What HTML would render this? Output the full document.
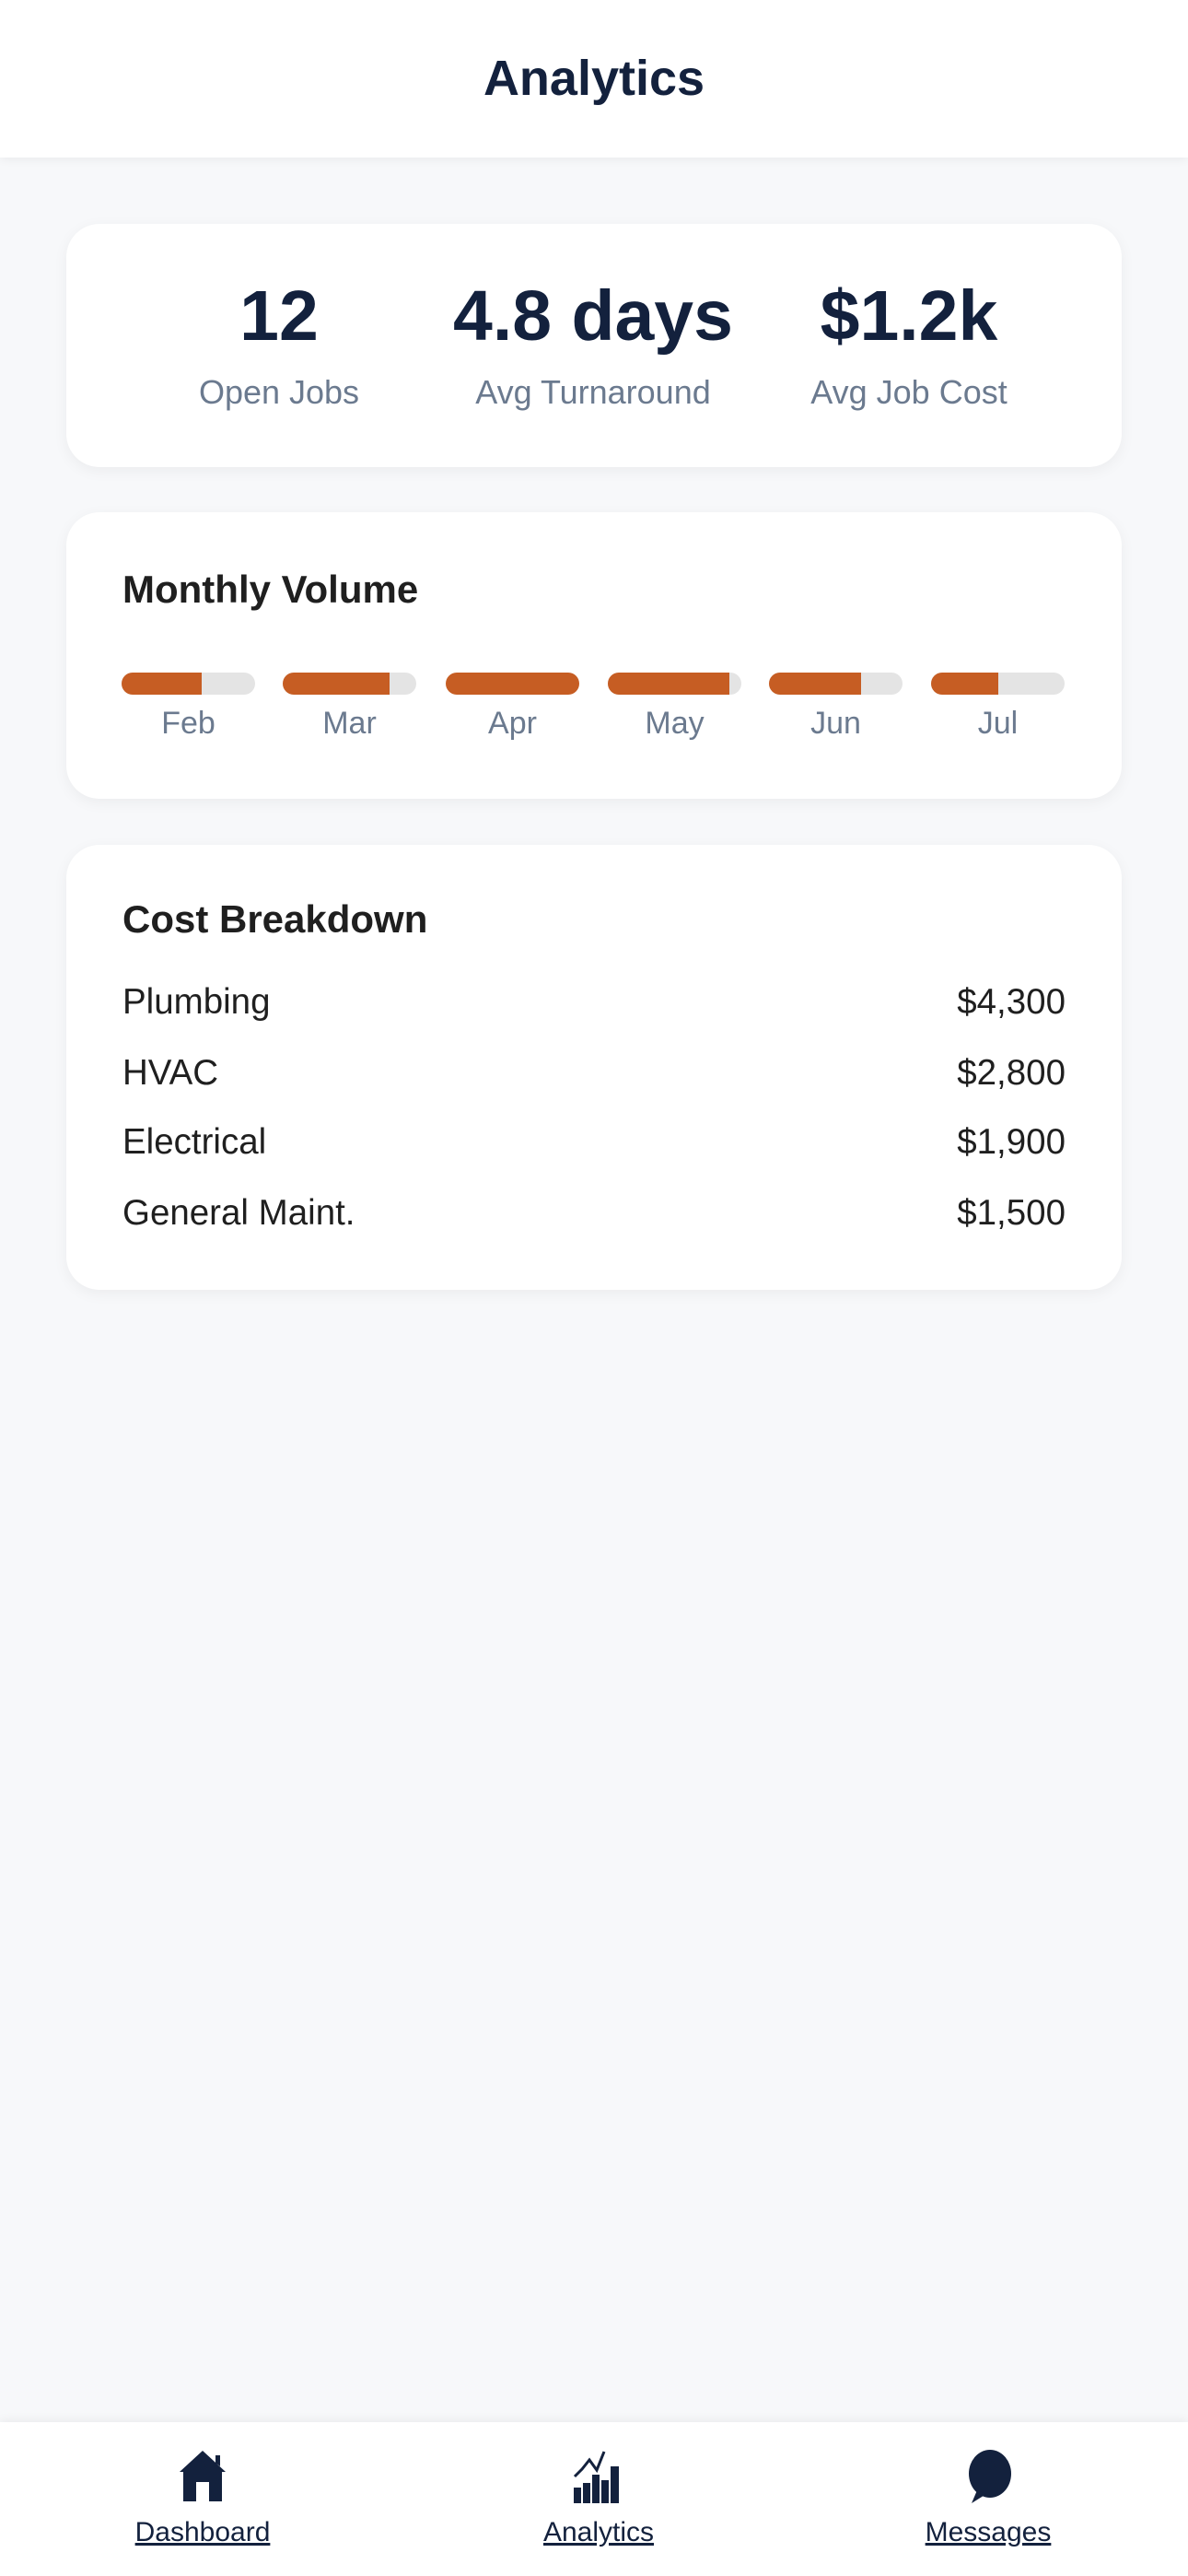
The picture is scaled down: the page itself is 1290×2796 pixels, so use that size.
<!DOCTYPE html>
<html><head><meta charset="utf-8"><style>
*{box-sizing:border-box;margin:0;padding:0}
body{width:1290px;height:2796px;background:#f7f8fa;font-family:"Liberation Sans",sans-serif;position:relative;overflow:hidden}
.hdr{position:absolute;left:0;top:0;width:1290px;height:171px;background:#fff;box-shadow:0 2px 10px rgba(0,0,0,.06);text-align:center;line-height:171px;font-size:54px;font-weight:bold;color:#13213d}
.card{position:absolute;left:72px;width:1146px;background:#fff;border-radius:36px;box-shadow:0 4px 16px rgba(0,0,0,.05)}
.stat{position:absolute;text-align:center;width:360px}
.num{position:absolute;left:0;width:100%;top:57px;font-size:77px;font-weight:bold;color:#13213d;line-height:86px}
.lab{position:absolute;left:0;width:100%;top:162px;font-size:36px;color:#6b7a8f;line-height:42px}
.ttl{position:absolute;left:61px;font-size:42px;font-weight:bold;color:#1f1f1f;line-height:46px}
.bar{position:absolute;top:174px;height:24px;width:145px;border-radius:12px;background:#e4e4e4;overflow:hidden}
.bar i{display:block;height:100%;background:#c65d23}
.m{position:absolute;top:209px;width:145px;text-align:center;font-size:34px;color:#6b7a8f;line-height:40px}
.row{position:absolute;left:61px;right:61px;font-size:38.5px;color:#1f1f1f;line-height:44px}
.row span{float:right}
.nav{position:absolute;left:0;top:2629px;width:1290px;height:167px;background:#fff;box-shadow:0 -2px 10px rgba(0,0,0,.06)}
.it{position:absolute;top:0;width:430px;text-align:center}
.it svg{position:absolute;top:30px;left:50%;transform:translateX(-50%)}
.it a{position:absolute;top:102px;left:0;width:100%;font-size:30px;color:#13213d;text-decoration:underline;line-height:36px}
</style></head><body>
<div class="hdr">Analytics</div>

<div class="card" style="top:243px;height:264px">
 <div class="stat" style="left:51px"><div class="num">12</div><div class="lab">Open Jobs</div></div>
 <div class="stat" style="left:392px"><div class="num">4.8 days</div><div class="lab">Avg Turnaround</div></div>
 <div class="stat" style="left:735px"><div class="num">$1.2k</div><div class="lab">Avg Job Cost</div></div>
</div>

<div class="card" style="top:556px;height:311px">
 <div class="ttl" style="top:61px">Monthly Volume</div>
 <div class="bar" style="left:60px"><i style="width:60%"></i></div>
 <div class="bar" style="left:235px"><i style="width:80%"></i></div>
 <div class="bar" style="left:412px"><i style="width:100%"></i></div>
 <div class="bar" style="left:588px"><i style="width:91%"></i></div>
 <div class="bar" style="left:763px"><i style="width:69%"></i></div>
 <div class="bar" style="left:939px"><i style="width:50%"></i></div>
 <div class="m" style="left:60px">Feb</div>
 <div class="m" style="left:235px">Mar</div>
 <div class="m" style="left:412px">Apr</div>
 <div class="m" style="left:588px">May</div>
 <div class="m" style="left:763px">Jun</div>
 <div class="m" style="left:939px">Jul</div>
</div>

<div class="card" style="top:917px;height:483px">
 <div class="ttl" style="top:58px">Cost Breakdown</div>
 <div class="row" style="top:149px">Plumbing<span>$4,300</span></div>
 <div class="row" style="top:226px">HVAC<span>$2,800</span></div>
 <div class="row" style="top:301px">Electrical<span>$1,900</span></div>
 <div class="row" style="top:378px">General Maint.<span>$1,500</span></div>
</div>

<div class="nav">
 <div class="it" style="left:5px">
  <svg width="60" height="58" viewBox="0 0 60 58"><path d="M30 1 L55 24 L51 24 L51 56 L37 56 L37 35 L23 35 L23 56 L9 56 L9 24 L5 24 Z M44 6 L49 6 L49 18 L44 14 Z" fill="#13213d"/></svg>
  <a>Dashboard</a>
 </div>
 <div class="it" style="left:435px">
  <svg width="60" height="60" viewBox="0 0 60 60"><path d="M4 29 L12 21 L20 11 L28 22 L36 2" fill="none" stroke="#13213d" stroke-width="3"/><rect x="3" y="41" width="8" height="17" fill="#13213d"/><rect x="13" y="36" width="8" height="22" fill="#13213d"/><rect x="23" y="27" width="8" height="31" fill="#13213d"/><rect x="33" y="33" width="8" height="25" fill="#13213d"/><rect x="43" y="18" width="9" height="40" fill="#13213d"/></svg>
  <a>Analytics</a>
 </div>
 <div class="it" style="left:858px">
  <svg width="60" height="60" viewBox="0 0 60 60"><ellipse cx="32" cy="26" rx="23" ry="26" fill="#13213d"/><path d="M18 44 L12 58 L28 48 Z" fill="#13213d"/></svg>
  <a>Messages</a>
 </div>
</div>
</body></html>
